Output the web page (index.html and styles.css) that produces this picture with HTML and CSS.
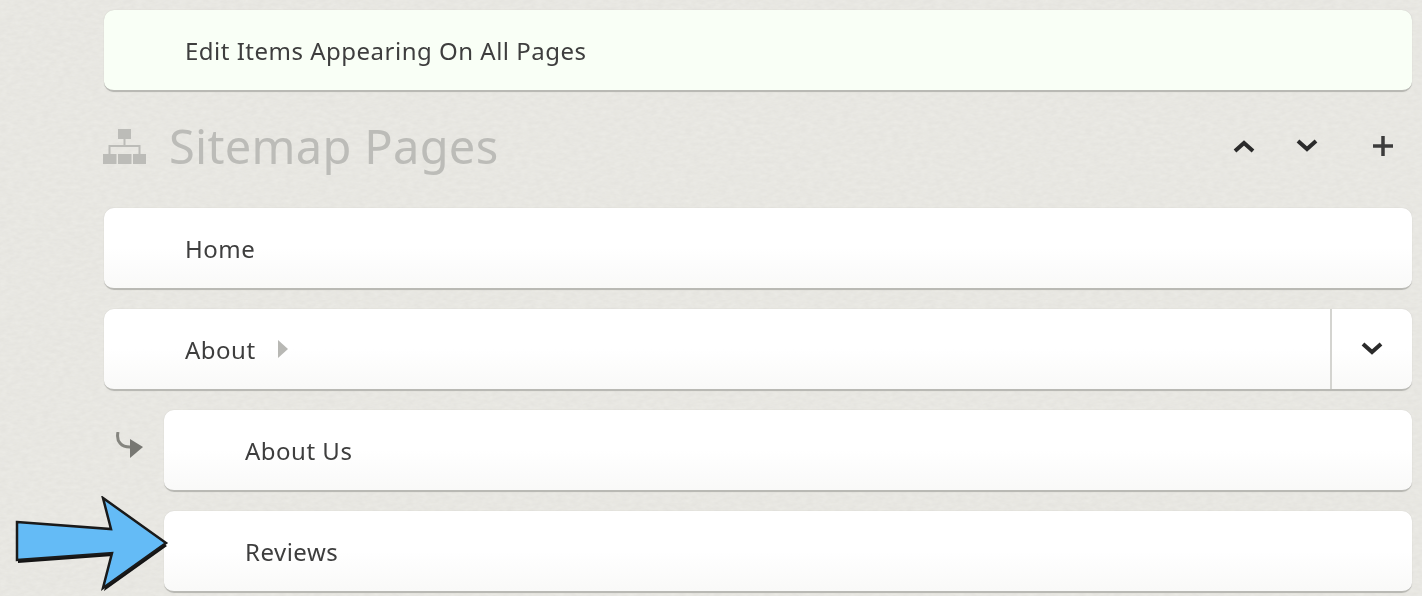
FILE: index.html
```html
<!DOCTYPE html>
<html lang="en">
<head>
  <meta charset="UTF-8" />
  <title>Sitemap Pages</title>
  <link rel="stylesheet" href="styles.css">
</head>
<body>
  <div class="container">
    <a class="row row-global">Edit Items Appearing On All Pages</a>

    <div class="section-head">
      <h2>
        <svg class="sitemap-icon" width="43" height="35" viewBox="0 0 43 35">
          <path d="M15 0h13v10h-13z M0 25h13.500v10h-13.500z M15 25h13.500v10h-13.500z M30 25h13v10h-13z" fill="#bcbcb8"/>
          <path d="M21.500 10v7 M6.500 25v-8h30v8" fill="none" stroke="#bcbcb8" stroke-width="2"/>
        </svg>
        Sitemap Pages
      </h2>
      <div class="tools">
        <svg width="24" height="16" viewBox="0 0 24 16"><path d="M3 13l9-8 9 8" class="chev"/></svg>
        <svg width="24" height="16" viewBox="0 0 24 16"><path d="M3 3l9 8 9-8" class="chev"/></svg>
        <svg class="tool-add" width="24" height="24" viewBox="0 0 24 24"><path d="M12 2v20M2 12h20" class="plus"/></svg>
      </div>
    </div>

    <a class="row">Home</a>

    <div class="row row-split">
      <span class="row-label">About <span class="caret"></span></span>
      <span class="row-toggle">
        <svg width="24" height="16" viewBox="0 0 24 16"><path d="M3 3l9 8 9-8" class="chev"/></svg>
      </span>
    </div>

    <div class="child">
      <svg class="child-icon" width="28" height="28" viewBox="0 0 28 28">
        <path d="M2 0c-2 9 3 16 14 15" fill="none" stroke="#85857f" stroke-width="3"/>
        <path d="M14 7l13 8-13 11z" fill="#777772"/>
      </svg>
      <a class="row">About Us</a>
    </div>
    <div class="child">
      <a class="row">Reviews</a>
    </div>
  </div>

  <svg class="callout" width="170" height="100" viewBox="0 0 170 100">
    <path d="M17 26l94 7-8-31 63 45-63 45 9-35-95 7z" fill="#141414" transform="translate(1 3)"/>
    <path d="M17 26l94 7-8-31 63 45-63 45 9-35-95 7z" fill="#64bbf6" stroke="#1a1a1a" stroke-width="2.500"/>
  </svg>
</body>
</html>
```

FILE: styles.css
```css
* {
  box-sizing: border-box;
}
html, body {
  height: 100%;
}
body {
  font-family: "Noto Sans", "Open Sans", sans-serif;
  margin: 0;
  overflow: hidden;
  position: relative;
  background-color: #e5e4df;
  background-image: url("data:image/svg+xml,%3Csvg xmlns='http://www.w3.org/2000/svg' width='400' height='300'%3E%3Cfilter id='n'%3E%3CfeTurbulence type='fractalNoise' baseFrequency='.14 .28' numOctaves='3'/%3E%3CfeColorMatrix values='0 0 0 0 1 0 0 0 0 1 0 0 0 0 .95 .9 0 0 0 -.2'/%3E%3C/filter%3E%3Crect width='400' height='300' filter='url(%23n)' opacity='.4'/%3E%3C/svg%3E");
}
.container {
  padding: 10px 10px 0 104px;
  display: flex;
  flex-direction: column;
  gap: 19px;
  filter: blur(0.4px);
}
.row {
  display: flex;
  align-items: center;
  height: 82px;
  padding-left: 81px;
  font-size: 24px;
  letter-spacing: 0.5px;
  color: #3e3e3e;
  background: linear-gradient(#ffffff 50%, #f9f9f8);
  border-radius: 10px;
  border-bottom: 2px solid #b9b9b4;
  box-shadow: 0 0 1px #bdbdb8;
}
.row-global {
  background: #f9fff6;
}
.section-head {
  display: flex;
  align-items: center;
  justify-content: space-between;
  height: 78px;
  padding-bottom: 8px;
}
.section-head h2 {
  display: flex;
  align-items: center;
  gap: 23px;
  margin: 0 0 0 -1px;
  font-size: 47px;
  line-height: 60px;
  font-weight: normal;
  letter-spacing: 0.3px;
  color: #bcbcb8;
}
.section-head h2 svg {
  margin-top: 1px;
}
.tools {
  display: flex;
  align-items: center;
  gap: 39px;
  margin-right: 17px;
}
.tool-add {
  margin-left: 13px;
}
.chev {
  fill: none;
  stroke: #2b2b2b;
  stroke-width: 4;
}
.plus {
  fill: none;
  stroke: #3c3c3c;
  stroke-width: 3.500;
}
.row-split {
  padding-left: 0;
}
.row-label {
  flex: 1;
  display: flex;
  align-items: center;
  gap: 22px;
  padding-left: 81px;
}
.caret {
  width: 0;
  height: 0;
  border-left: 10px solid #b8b8b4;
  border-top: 9px solid transparent;
  border-bottom: 9px solid transparent;
}
.row-toggle {
  width: 82px;
  height: 100%;
  display: flex;
  align-items: center;
  justify-content: center;
  border-left: 2px solid #d4d4d0;
}
.child {
  padding-left: 60px;
  position: relative;
}
.child-icon {
  position: absolute;
  left: 12px;
  top: 22px;
}
.callout {
  position: absolute;
  left: 0;
  top: 496px;
}
```
